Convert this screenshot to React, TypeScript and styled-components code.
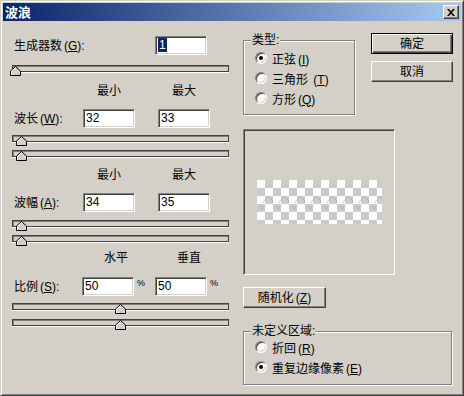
import React from 'react';
import styled, { createGlobalStyle } from 'styled-components';

const face = '#D4D0C8';
const shadow = '#808080';
const darkShadow = '#404040';
const highlight = '#FFFFFF';

const GlobalStyle = createGlobalStyle`
  html, body {
    margin: 0;
    padding: 0;
    background: ${face};
  }
  body {
    font-family: "Liberation Sans", "Noto Sans CJK SC", sans-serif;
    font-size: 12px;
    color: #000;
  }
  * {
    box-sizing: border-box;
  }
`;

const Window = styled.div`
  width: 464px;
  height: 396px;
  display: flex;
  flex-direction: column;
  padding: 2px;
  background: ${face};
  border: 1px solid;
  border-color: ${face} ${darkShadow} ${darkShadow} ${face};
  box-shadow: inset 1px 1px ${highlight}, inset -1px -1px ${shadow};
`;

const TitleBar = styled.div`
  height: 18px;
  display: flex;
  align-items: center;
  justify-content: space-between;
  padding: 0 2px;
  background: linear-gradient(to right, #0a246a, #a6caf0);
`;

const Title = styled.span`
  color: #fff;
  font-weight: bold;
  font-size: 13px;
  line-height: 14px;
  font-family: "Noto Sans CJK SC", sans-serif;
`;

const CloseButton = styled.div`
  width: 16px;
  height: 14px;
  display: flex;
  align-items: center;
  justify-content: center;
  background: ${face};
  border: 1px solid;
  border-color: ${highlight} ${darkShadow} ${darkShadow} ${highlight};
  box-shadow: inset -1px -1px ${shadow};
`;

const Body = styled.div`
  flex: 1;
  display: flex;
  gap: 14px;
  padding: 0 8px 0 9px;
`;

const LeftColumn = styled.div`
  width: 217px;
  display: flex;
  flex-direction: column;
`;

const RightColumn = styled.div`
  width: 210px;
  display: flex;
  flex-direction: column;
  padding-top: 12px;
`;

const FieldRow = styled.div<{ $mt: number; $cols: string }>`
  display: grid;
  grid-template-columns: ${({ $cols }) => $cols};
  align-items: center;
  height: 19px;
  margin-top: ${({ $mt }) => $mt}px;
`;

const HeaderRow = styled.div<{ $mt: number; $cols: string }>`
  display: grid;
  grid-template-columns: ${({ $cols }) => $cols};
  height: 14px;
  line-height: 14px;
  margin-top: ${({ $mt }) => $mt}px;
  text-align: center;
`;

const Label = styled.span`
  padding-left: 2px;
  line-height: 14px;
  white-space: nowrap;
`;

const NumberBox = styled.div`
  height: 19px;
  padding: 0 2px;
  background: #fff;
  border: 1px solid;
  border-color: ${shadow} ${highlight} ${highlight} ${shadow};
  box-shadow: inset 1px 1px ${darkShadow}, inset -1px -1px ${face};
  font-family: "Liberation Sans", sans-serif;
  font-size: 12px;
  line-height: 17px;
`;

const Selected = styled.span`
  background: #0a246a;
  color: #fff;
  padding: 0 1px;
`;

const Percent = styled.span`
  align-self: start;
  padding-left: 3px;
  margin-top: 1px;
  font-size: 9px;
  line-height: 10px;
`;

const Slider = styled.div<{ $mt: number }>`
  height: 10px;
  margin-top: ${({ $mt }) => $mt}px;
`;

const Track = styled.div`
  position: relative;
  height: 7px;
  background: ${face};
  border: 1px solid ${darkShadow};
  box-shadow: inset 1px 1px ${shadow}, 0 1px ${highlight};
`;

const ThumbIcon = styled.svg`
  position: absolute;
  top: 0;
  display: block;
`;

const Thumb = ({ center }: { center: number }) => (
  <ThumbIcon width="11" height="10" viewBox="0 0 11 10" style={{ left: center - 13 - 5 }}>
    <polygon points="5.5,0.5 10.5,5 10.5,9.5 0.5,9.5 0.5,5" fill={face} stroke="#000" />
    <polyline points="1.5,9 1.5,5.4 5.5,1.8" fill="none" stroke="#fff" />
  </ThumbIcon>
);

const TopRow = styled.div`
  display: flex;
  justify-content: space-between;
  align-items: flex-start;
`;

const GroupBox = styled.div<{ $w: number; $h: number; $mt: number; $pt: number }>`
  position: relative;
  width: ${({ $w }) => $w}px;
  height: ${({ $h }) => $h}px;
  margin-top: ${({ $mt }) => $mt}px;
  padding: ${({ $pt }) => $pt}px 0 0 11px;
  border: 1px solid ${shadow};
  box-shadow: inset 1px 1px ${highlight}, 1px 1px ${highlight};
`;

const Legend = styled.span`
  position: absolute;
  top: -8px;
  left: 7px;
  padding: 0 1px;
  background: ${face};
  line-height: 14px;
`;

const RadioRow = styled.div`
  height: 20px;
  display: flex;
  align-items: center;
  gap: 5px;
  white-space: nowrap;
`;

const RadioCircle = styled.span<{ $checked?: boolean }>`
  width: 12px;
  height: 12px;
  border-radius: 50%;
  display: flex;
  align-items: center;
  justify-content: center;
  background: #fff;
  border: 1px solid;
  border-color: ${shadow} ${highlight} ${highlight} ${shadow};
  box-shadow: inset 1px 1px ${darkShadow}, inset -1px -1px ${face};

  &::after {
    content: '';
    width: 4px;
    height: 4px;
    border-radius: 50%;
    background: ${({ $checked }) => ($checked ? '#000' : 'transparent')};
  }
`;

const ButtonStack = styled.div`
  display: flex;
  flex-direction: column;
  gap: 7px;
`;

const Button = styled.div<{ $default?: boolean; $w?: number; $mt?: number }>`
  width: ${({ $w }) => $w ?? 82}px;
  height: 21px;
  margin-top: ${({ $mt }) => $mt ?? 0}px;
  display: flex;
  align-items: center;
  justify-content: center;
  background: ${face};
  line-height: 14px;
  border: 1px solid;
  border-color: ${({ $default }) =>
    $default ? '#000' : `${highlight} ${darkShadow} ${darkShadow} ${highlight}`};
  box-shadow: ${({ $default }) =>
    $default
      ? `inset 1px 1px ${highlight}, inset -1px -1px ${darkShadow}, inset -2px -2px ${shadow}`
      : `inset -1px -1px ${shadow}`};
`;

const Preview = styled.div`
  width: 152px;
  height: 146px;
  margin-top: 14px;
  display: flex;
  align-items: center;
  justify-content: center;
  border: 1px solid;
  border-color: ${shadow} ${highlight} ${highlight} ${shadow};
  box-shadow: inset 1px 1px ${darkShadow}, inset -1px -1px ${face};
`;

const Checker = styled.div`
  width: 125px;
  height: 44px;
  margin-left: 1px;
  background: repeating-conic-gradient(#cccccc 0 25%, #ffffff 0 50%) 0 0 / 16px 16px;
`;

const Paren = styled.span`
  margin-left: 2px;
`;

const WaveMarks = () => {
  const arcs = [];
  for (let i = 0; i < 8; i++) {
    const x = 6 + i * 16;
    arcs.push(
      <path key={`a${i}`} d={`M${x} 23 Q${x + 3} 16 ${x + 6} 17 Q${x + 9} 19 ${x + 10} 23`} />,
      <path key={`v${i}`} d={`M${x - 3} 26 L${x - 1} 29 L${x + 1} 26`} />
    );
  }
  return (
    <svg width="125" height="44" viewBox="0 0 125 44" style={{ display: 'block' }}>
      <g fill="none" stroke="#999999" strokeWidth="1" strokeDasharray="1 1">
        {arcs}
      </g>
    </svg>
  );
};

const Mn = ({ children }: { children: string }) => (
  <Paren>
    (<u>{children}</u>)
  </Paren>
);

const waveCols = '71px 52px 23px 52px 1fr';
const scaleCols = '70px 52px 21px 52px 1fr';
const scaleHeaderCols = '78px 52px 21px 52px 1fr';

const App = () => (
  <>
    <GlobalStyle />
    <Window>
      <TitleBar>
        <Title>波浪</Title>
        <CloseButton>
          <svg width="8" height="7" viewBox="0 0 8 7">
            <path d="M0 0h2l2 2.2L6 0h2L5 3.5 8 7H6L4 4.8 2 7H0l3-3.5z" fill="#000" />
          </svg>
        </CloseButton>
      </TitleBar>
      <Body>
        <LeftColumn>
          <FieldRow $mt={15} $cols="143px 52px 1fr">
            <Label>
              生成器数<Mn>G</Mn>:
            </Label>
            <NumberBox>
              <Selected>1</Selected>
            </NumberBox>
          </FieldRow>
          <Slider $mt={10}>
            <Track>
              <Thumb center={15} />
            </Track>
          </Slider>

          <HeaderRow $mt={9} $cols={waveCols}>
            <span />
            <span>最小</span>
            <span />
            <span>最大</span>
          </HeaderRow>
          <FieldRow $mt={11} $cols={waveCols}>
            <Label>
              波长<Mn>W</Mn>:
            </Label>
            <NumberBox>32</NumberBox>
            <span />
            <NumberBox>33</NumberBox>
          </FieldRow>
          <Slider $mt={7}>
            <Track>
              <Thumb center={21} />
            </Track>
          </Slider>
          <Slider $mt={5}>
            <Track>
              <Thumb center={21} />
            </Track>
          </Slider>

          <HeaderRow $mt={8} $cols={waveCols}>
            <span />
            <span>最小</span>
            <span />
            <span>最大</span>
          </HeaderRow>
          <FieldRow $mt={11} $cols={waveCols}>
            <Label>
              波幅<Mn>A</Mn>:
            </Label>
            <NumberBox>34</NumberBox>
            <span />
            <NumberBox>35</NumberBox>
          </FieldRow>
          <Slider $mt={8}>
            <Track>
              <Thumb center={21} />
            </Track>
          </Slider>
          <Slider $mt={5}>
            <Track>
              <Thumb center={21} />
            </Track>
          </Slider>

          <HeaderRow $mt={6} $cols={scaleHeaderCols}>
            <span />
            <span>水平</span>
            <span />
            <span>垂直</span>
          </HeaderRow>
          <FieldRow $mt={12} $cols={scaleCols}>
            <Label>
              比例<Mn>S</Mn>:
            </Label>
            <NumberBox>50</NumberBox>
            <Percent>%</Percent>
            <NumberBox>50</NumberBox>
            <Percent>%</Percent>
          </FieldRow>
          <Slider $mt={7}>
            <Track>
              <Thumb center={120} />
            </Track>
          </Slider>
          <Slider $mt={6}>
            <Track>
              <Thumb center={120} />
            </Track>
          </Slider>
        </LeftColumn>

        <RightColumn>
          <TopRow>
            <GroupBox $w={112} $h={75} $mt={7} $pt={7}>
              <Legend>类型:</Legend>
              <RadioRow>
                <RadioCircle $checked />
                <span>
                  正弦<Mn>I</Mn>
                </span>
              </RadioRow>
              <RadioRow>
                <RadioCircle />
                <span>
                  三角形 <Mn>T</Mn>
                </span>
              </RadioRow>
              <RadioRow>
                <RadioCircle />
                <span>
                  方形<Mn>Q</Mn>
                </span>
              </RadioRow>
            </GroupBox>
            <ButtonStack>
              <Button $default>确定</Button>
              <Button>取消</Button>
            </ButtonStack>
          </TopRow>

          <Preview>
            <Checker>
              <WaveMarks />
            </Checker>
          </Preview>

          <Button $w={83} $mt={12}>
            随机化<Mn>Z</Mn>
          </Button>

          <GroupBox $w={209} $h={54} $mt={23} $pt={5}>
            <Legend>未定义区域:</Legend>
            <RadioRow>
              <RadioCircle />
              <span>
                折回<Mn>R</Mn>
              </span>
            </RadioRow>
            <RadioRow>
              <RadioCircle $checked />
              <span>
                重复边缘像素<Mn>E</Mn>
              </span>
            </RadioRow>
          </GroupBox>
        </RightColumn>
      </Body>
    </Window>
  </>
);

export default App;
